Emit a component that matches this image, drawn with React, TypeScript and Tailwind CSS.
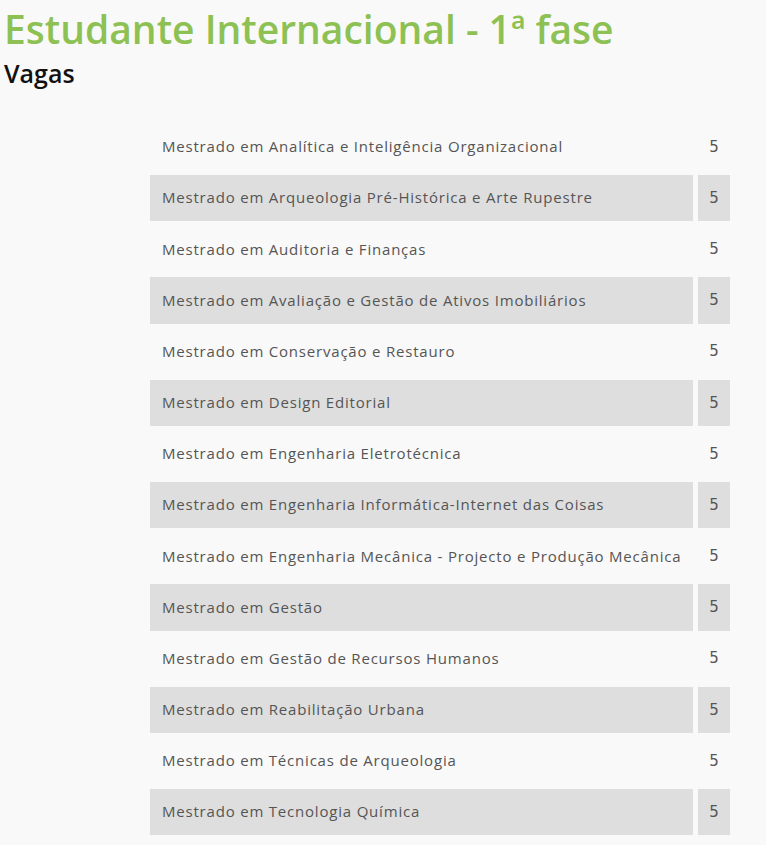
import React from "react";

const rows = [
  "Mestrado em Analítica e Inteligência Organizacional",
  "Mestrado em Arqueologia Pré-Histórica e Arte Rupestre",
  "Mestrado em Auditoria e Finanças",
  "Mestrado em Avaliação e Gestão de Ativos Imobiliários",
  "Mestrado em Conservação e Restauro",
  "Mestrado em Design Editorial",
  "Mestrado em Engenharia Eletrotécnica",
  "Mestrado em Engenharia Informática-Internet das Coisas",
  "Mestrado em Engenharia Mecânica - Projecto e Produção Mecânica",
  "Mestrado em Gestão",
  "Mestrado em Gestão de Recursos Humanos",
  "Mestrado em Reabilitação Urbana",
  "Mestrado em Técnicas de Arqueologia",
  "Mestrado em Tecnologia Química",
];

export default function App() {
  return (
    <div className="min-h-[845px] bg-[#f9f9f9] px-[4px] pt-[6px] font-['Open_Sans',sans-serif]">
      <h1 className="text-[39px] leading-[46px] font-semibold text-[#8dc153]">
        Estudante Internacional - 1ª fase
      </h1>
      <h2 className="mt-[7px] text-[25px] leading-[28px] font-semibold text-[#111]">Vagas</h2>
      <table className="ml-[141px] mt-[32px] w-[590px] border-separate border-spacing-[5px]">
        <tbody>
          {rows.map((r, i) => {
            const bg = i % 2 === 1 ? "bg-[#dedede]" : "";
            return (
              <tr key={i} className="h-[46.17px]">
                <td className={`${bg} pl-[12px] pb-[1px] text-[15px] tracking-[0.8px] text-[#555]`}>{r}</td>
                <td className={`${bg} w-[32px] text-center text-[15px] text-[#555] font-['DejaVu_Sans',sans-serif]`}>5</td>
              </tr>
            );
          })}
        </tbody>
      </table>
    </div>
  );
}
